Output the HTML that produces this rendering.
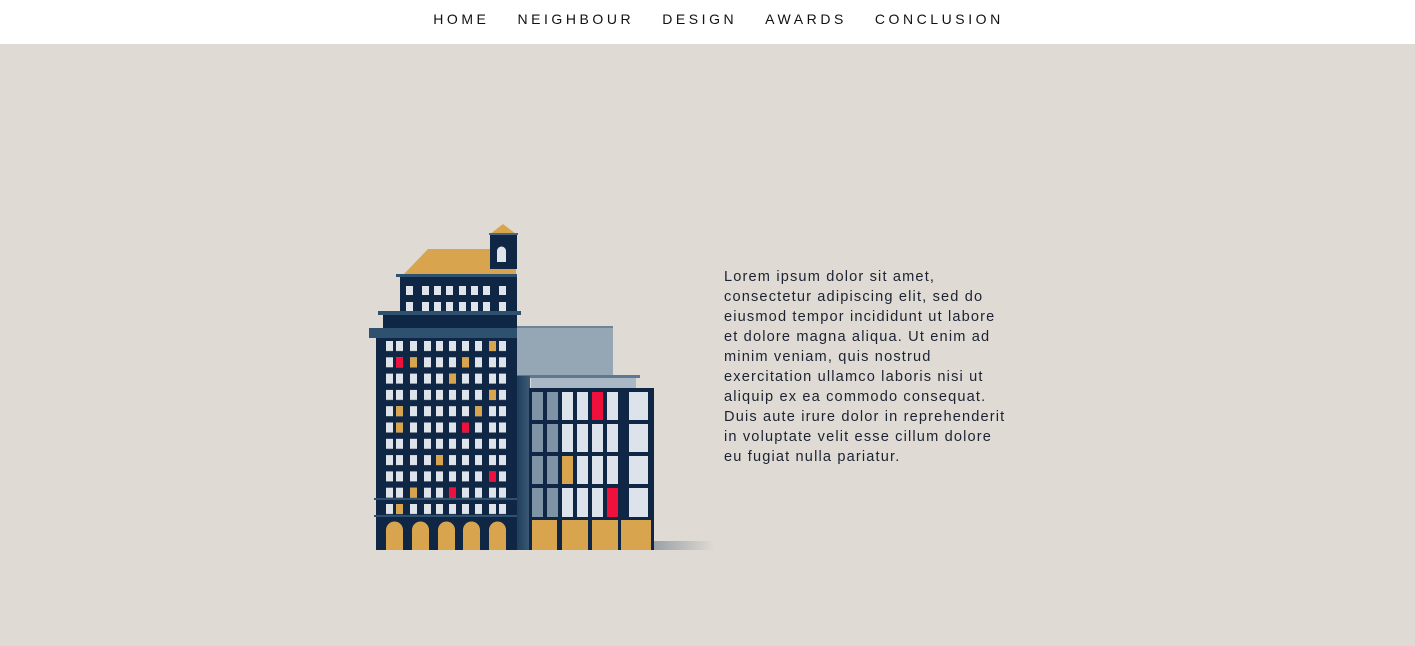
<!DOCTYPE html>
<html><head><meta charset="utf-8"><style>
body{margin:0;width:1415px;height:646px;background:#dfdbd4;font-family:"Liberation Sans",sans-serif;overflow:hidden;position:relative}
.nav{position:absolute;top:0;left:0;width:1415px;height:44px;background:#fff;text-align:center;box-sizing:border-box;padding-left:22px}
.nav span{display:inline-block;font-size:14px;letter-spacing:3.55px;color:#111;margin:0 14px;line-height:38px}
.txt{position:absolute;left:724px;top:267px;white-space:nowrap;font-size:14.6px;line-height:20px;letter-spacing:1.15px;color:#1c2233}
svg{position:absolute;left:0;top:0}
</style></head><body>
<div class="nav"><span>HOME</span><span>NEIGHBOUR</span><span>DESIGN</span><span>AWARDS</span><span>CONCLUSION</span></div>
<svg width="1415" height="646">
<defs>
<pattern id="mw" patternUnits="userSpaceOnUse" x="0" y="341" width="1415" height="16.3">
<g fill="#dfe4ea"><rect x="386" y="0" width="7" height="10"/><rect x="396" y="0" width="7" height="10"/><rect x="410" y="0" width="7" height="10"/><rect x="424" y="0" width="7" height="10"/><rect x="436" y="0" width="7" height="10"/><rect x="449" y="0" width="7" height="10"/><rect x="462" y="0" width="7" height="10"/><rect x="475" y="0" width="7" height="10"/><rect x="489" y="0" width="7" height="10"/><rect x="499" y="0" width="7" height="10"/></g>
</pattern>
<linearGradient id="sh" x1="0" x2="1"><stop offset="0" stop-color="#9aa0a4"/><stop offset="1" stop-color="#dfdbd4"/></linearGradient>
<linearGradient id="mid" x1="0" x2="1"><stop offset="0" stop-color="#1d3d5c"/><stop offset="1" stop-color="#3c5a74"/></linearGradient>
</defs>
<rect x="653" y="541" width="62" height="9" fill="url(#sh)"/>
<rect x="516" y="326" width="97" height="50" fill="#95a6b4"/>
<rect x="516" y="326" width="97" height="2" fill="#6e8598"/>
<rect x="516" y="375" width="124" height="3" fill="#5e7891"/>
<rect x="531" y="378" width="105" height="10" fill="#a9b8c4"/>
<rect x="516" y="376" width="14" height="174" fill="url(#mid)"/>
<rect x="529" y="388" width="125" height="162" fill="#0f2644"/>
<g fill="#dde3ea">
<rect x="562" y="392" width="11" height="28"/><rect x="577" y="392" width="11" height="28"/><rect x="607" y="392" width="11" height="28"/><rect x="629" y="392" width="19" height="28"/>
<rect x="562" y="424" width="11" height="28"/><rect x="577" y="424" width="11" height="28"/><rect x="592" y="424" width="11" height="28"/><rect x="607" y="424" width="11" height="28"/><rect x="629" y="424" width="19" height="28"/>
<rect x="577" y="456" width="11" height="28"/><rect x="592" y="456" width="11" height="28"/><rect x="607" y="456" width="11" height="28"/><rect x="629" y="456" width="19" height="28"/>
<rect x="562" y="488" width="11" height="29"/><rect x="577" y="488" width="11" height="29"/><rect x="592" y="488" width="11" height="29"/><rect x="629" y="488" width="19" height="29"/>
</g>
<g fill="#7f93a6">
<rect x="532" y="392" width="11" height="28"/><rect x="547" y="392" width="11" height="28"/><rect x="532" y="424" width="11" height="28"/><rect x="547" y="424" width="11" height="28"/><rect x="532" y="456" width="11" height="28"/><rect x="547" y="456" width="11" height="28"/><rect x="532" y="488" width="11" height="29"/><rect x="547" y="488" width="11" height="29"/>
</g>
<rect x="592" y="392" width="11" height="28" fill="#f0103c"/>
<rect x="607" y="488" width="11" height="29" fill="#f0103c"/>
<rect x="562" y="456" width="11" height="28" fill="#d9a44e"/>
<g fill="#d9a44e"><rect x="532" y="520" width="25" height="30"/><rect x="562" y="520" width="26" height="30"/><rect x="592" y="520" width="26" height="30"/><rect x="621" y="520" width="30" height="30"/></g>
<polygon points="403,275 428,249 516,249 516,275" fill="#d9a44e"/>
<polygon points="490,234 503,224 516,234" fill="#d9a44e"/>
<rect x="490" y="234" width="27" height="35" fill="#0f2644"/>
<rect x="489" y="233" width="29" height="2" fill="#4a6680"/>
<path d="M497,262 V251 a4.5,4.5 0 0 1 9,0 V262 Z" fill="#dfe4ea"/>
<rect x="396" y="274" width="121" height="3" fill="#2f5170"/>
<rect x="400" y="277" width="117" height="37" fill="#0f2644"/>
<g fill="#dfe4ea">
<rect x="406" y="286" width="7" height="9"/><rect x="422" y="286" width="7" height="9"/><rect x="434" y="286" width="7" height="9"/><rect x="446" y="286" width="7" height="9"/><rect x="459" y="286" width="7" height="9"/><rect x="471" y="286" width="7" height="9"/><rect x="483" y="286" width="7" height="9"/><rect x="499" y="286" width="7" height="9"/>
<rect x="406" y="302" width="7" height="9"/><rect x="422" y="302" width="7" height="9"/><rect x="434" y="302" width="7" height="9"/><rect x="446" y="302" width="7" height="9"/><rect x="459" y="302" width="7" height="9"/><rect x="471" y="302" width="7" height="9"/><rect x="483" y="302" width="7" height="9"/><rect x="499" y="302" width="7" height="9"/>
</g>
<rect x="378" y="311" width="143" height="4" fill="#2f5170"/>
<rect x="383" y="315" width="134" height="14" fill="#0f2644"/>
<rect x="369" y="328" width="148" height="10" fill="#2f5170"/>
<rect x="376" y="338" width="141" height="212" fill="#0f2644"/>
<rect x="383" y="338" width="128" height="180" fill="url(#mw)"/>
<g fill="#d9a44e">
<rect x="489" y="341" width="7" height="10"/><rect x="410" y="357.3" width="7" height="10"/><rect x="462" y="357.3" width="7" height="10"/><rect x="449" y="373.6" width="7" height="10"/><rect x="489" y="389.9" width="7" height="10"/><rect x="396" y="406.2" width="7" height="10"/><rect x="475" y="406.2" width="7" height="10"/><rect x="396" y="422.5" width="7" height="10"/><rect x="436" y="455.1" width="7" height="10"/><rect x="410" y="487.7" width="7" height="10"/><rect x="396" y="504" width="7" height="10"/>
</g>
<g fill="#f0103c">
<rect x="396" y="357.3" width="7" height="10"/><rect x="462" y="422.5" width="7" height="10"/><rect x="489" y="471.4" width="7" height="10"/><rect x="449" y="487.7" width="7" height="10"/>
</g>
<rect x="374" y="498" width="143" height="2" fill="#2f5170"/>
<rect x="374" y="515" width="143" height="2" fill="#2f5170"/>
<g fill="#d9a44e">
<path d="M386,550 V530 a8.5,8.5 0 0 1 17,0 V550Z"/><path d="M412,550 V530 a8.5,8.5 0 0 1 17,0 V550Z"/><path d="M438,550 V530 a8.5,8.5 0 0 1 17,0 V550Z"/><path d="M463,550 V530 a8.5,8.5 0 0 1 17,0 V550Z"/><path d="M489,550 V530 a8.5,8.5 0 0 1 17,0 V550Z"/>
</g>
</svg>
<div class="txt">Lorem ipsum dolor sit amet,<br>consectetur adipiscing elit, sed do<br>eiusmod tempor incididunt ut labore<br>et dolore magna aliqua. Ut enim ad<br>minim veniam, quis nostrud<br>exercitation ullamco laboris nisi ut<br>aliquip ex ea commodo consequat.<br>Duis aute irure dolor in reprehenderit<br>in voluptate velit esse cillum dolore<br>eu fugiat nulla pariatur.</div>
</body></html>
